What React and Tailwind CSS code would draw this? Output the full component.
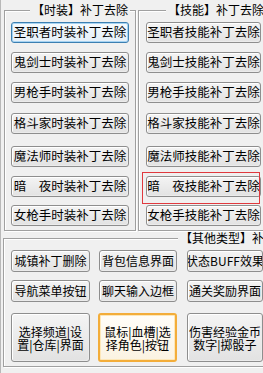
import React from "react";

const leftButtons = [
  { label: "圣职者时装补丁去除", mt: "mt-[4px]", look: "focus" },
  { label: "鬼剑士时装补丁去除", mt: "mt-[9px]" },
  { label: "男枪手时装补丁去除", mt: "mt-[9px]" },
  { label: "格斗家时装补丁去除", mt: "mt-[10px]" },
  { label: "魔法师时装补丁去除", mt: "mt-[12px]" },
  { label: "暗　夜时装补丁去除", mt: "mt-[9px]" },
  { label: "女枪手时装补丁去除", mt: "mt-[8px]" },
];

const rightButtons = [
  { label: "圣职者技能补丁去除", mt: "mt-[4px]" },
  { label: "鬼剑士技能补丁去除", mt: "mt-[9px]" },
  { label: "男枪手技能补丁去除", mt: "mt-[9px]" },
  { label: "格斗家技能补丁去除", mt: "mt-[10px]" },
  { label: "魔法师技能补丁去除", mt: "mt-[12px]" },
  { label: "暗　夜技能补丁去除", mt: "mt-[9px]" },
  { label: "女枪手技能补丁去除", mt: "mt-[8px]" },
];

function WinButton({ children, look, className = "" }) {
  let skin =
    "border border-[#8e8e8e] bg-gradient-to-b from-[#f4f4f4] to-[#e2e2e2] shadow-[inset_1px_1px_0_#ffffff,inset_-1px_-1px_0_#ebebeb]";
  if (look === "focus") {
    skin =
      "border border-[#3c7fb1] bg-gradient-to-b from-[#f6fbfe] to-[#e4eff8] shadow-[inset_0_0_0_1px_#a6d3f2]";
  }
  if (look === "hot") {
    skin =
      "border-2 border-[#f3ad3a] bg-gradient-to-b from-[#fffdf8] to-[#fbf3e2] shadow-[inset_0_0_0_1px_#fde7b8]";
  }
  return (
    <button
      className={`flex items-center justify-center rounded-[3px] text-black overflow-hidden whitespace-nowrap ${skin} ${className}`}
    >
      {children}
    </button>
  );
}

function GroupBox({ title, legendClass, className, children }) {
  return (
    <fieldset
      className={`border border-[#a0a0a0] shadow-[inset_1px_1px_0_#ffffff,1px_1px_0_#ffffff] ${className}`}
    >
      <legend className={`bg-[#f0f0f0] px-[2px] text-[12px] leading-[16px] text-black whitespace-nowrap ${legendClass}`}>
        {title}
      </legend>
      {children}
    </fieldset>
  );
}

export default function App() {
  return (
    <div className="relative w-[263px] h-[373px] overflow-hidden bg-[#f0f0f0] border-l border-[#b8b8b8] font-['Noto_Sans_CJK_SC','Noto_Sans',sans-serif]">
      {/* top two groups */}
      <div className="flex pt-[2px]">
        <GroupBox
          title="【时装】补丁去除"
          legendClass="ml-[19px]"
          className="ml-[3px] w-[132px] h-[229px] shrink-0 pl-[6px]"
        >
          <div className="flex flex-col">
            {leftButtons.map((b) => (
              <WinButton
                key={b.label}
                look={b.look}
                className={`${b.mt} w-[118px] h-[21px] text-[12.5px] leading-none`}
              >
                {b.label}
              </WinButton>
            ))}
          </div>
        </GroupBox>
        <GroupBox
          title="【技能】补丁去除"
          legendClass="ml-[20px]"
          className="ml-[2px] w-[150px] h-[229px] shrink-0 pl-[7px]"
        >
          <div className="flex flex-col">
            {rightButtons.map((b) => (
              <WinButton
                key={b.label}
                className={`${b.mt} w-[115px] h-[21px] text-[12.5px] leading-none`}
              >
                {b.label}
              </WinButton>
            ))}
          </div>
        </GroupBox>
      </div>

      {/* other types */}
      <GroupBox
        title="【其他类型】补丁去除"
        legendClass="ml-[167px]"
        className="-mt-[1px] ml-[2px] w-[280px] h-[137px] pl-[7px]"
      >
        <div className="flex flex-col mt-[4px]">
          <div className="flex h-[22px]">
            <WinButton className="w-[79px] text-[12px]">城镇补丁删除</WinButton>
            <WinButton className="ml-[9px] w-[78px] text-[12px]">背包信息界面</WinButton>
            <WinButton className="ml-[10px] w-[76px] text-[12px]">状态BUFF效果</WinButton>
          </div>
          <div className="flex h-[22px] mt-[8px]">
            <WinButton className="w-[79px] text-[12px]">导航菜单按钮</WinButton>
            <WinButton className="ml-[9px] w-[78px] text-[12px]">聊天输入边框</WinButton>
            <WinButton className="ml-[10px] w-[76px] text-[12px]">通关奖励界面</WinButton>
          </div>
          <div className="flex h-[49px] mt-[11px]">
            <WinButton className="w-[79px] text-[12px] leading-[13px] whitespace-normal text-center">
              <span>选择频道|设<br />置|仓库|界面</span>
            </WinButton>
            <WinButton look="hot" className="ml-[8px] w-[79px] text-[12px] leading-[13px] whitespace-normal text-center">
              <span>鼠标|血槽|选<br />择角色|按钮</span>
            </WinButton>
            <WinButton className="ml-[10px] w-[76px] text-[12px] leading-[13px] whitespace-normal text-center">
              <span>伤害经验金币<br />数字|掷骰子</span>
            </WinButton>
          </div>
        </div>
      </GroupBox>

      {/* red annotation box */}
      <div className="absolute left-[141px] top-[172px] w-[118px] h-[32px] border border-[#e0393e] pointer-events-none" />
    </div>
  );
}
